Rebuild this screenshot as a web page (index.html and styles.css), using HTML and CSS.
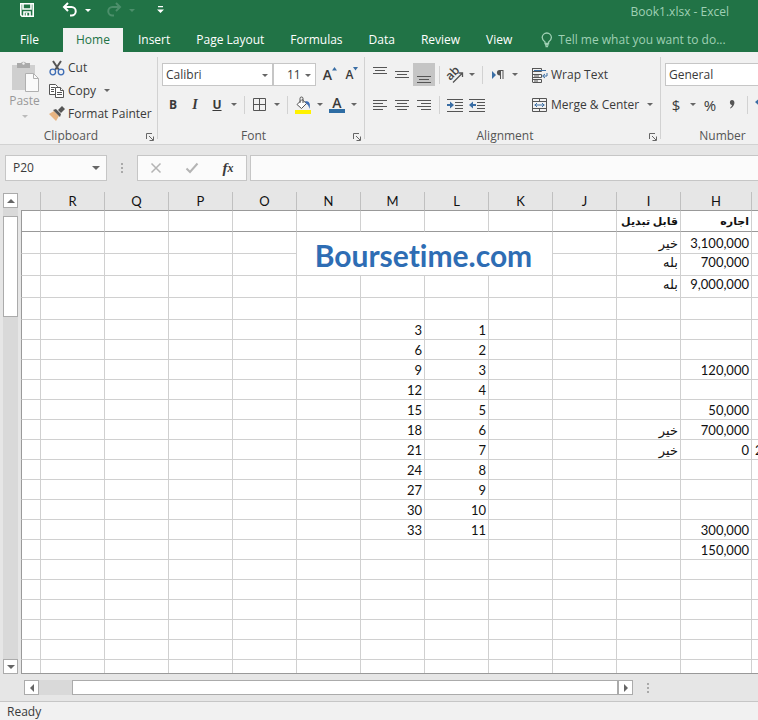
FILE: index.html
```
<!DOCTYPE html>
<html lang="en">
<head>
    <meta charset="UTF-8">
    <meta name="viewport" content="width=device-width, initial-scale=1.0">
    <title>Book1.xlsx - Excel</title>
    <link rel="stylesheet" href="styles.css">
</head>
<body>
    <header class="titlebar">
        <div class="quick-access">
            <button class="qa-button" aria-label="Save">
                <svg width="16" height="16" viewBox="0 0 16 16" fill="none" stroke="#fff" stroke-width="1.6"><path d="M1.8 1.8h12.4v12.4H3L1.8 13z"/><path d="M4 2v5h8V2M5 14v-4h6v4M7.500 11v3"/></svg>
            </button>
            <button class="qa-button undo" aria-label="Undo">
                <svg width="16" height="16" viewBox="0 0 16 16" fill="none" stroke="#fff" stroke-width="2"><path d="M6 1L2 5l4 4M2 5h7.500a4 4 0 0 1 0 8.500H8"/></svg>
            </button>
            <button class="qa-caret" aria-label="Undo list"><span class="caret light"></span></button>
            <button class="qa-button redo" aria-label="Redo" disabled>
                <svg width="16" height="16" viewBox="0 0 16 16" fill="none" stroke="#4c8f6b" stroke-width="2"><path d="M10 1l4 4-4 4M14 5H6.500a4 4 0 0 0 0 8.500H8"/></svg>
            </button>
            <button class="qa-caret" aria-label="Redo list" disabled><span class="caret faded"></span></button>
            <button class="qa-button customize" aria-label="Customize Quick Access Toolbar">
                <svg width="7" height="8" viewBox="0 0 7 8" fill="#fff"><path d="M1 0h5v1.300H1zM0 3.500h7L3.500 7z"/></svg>
            </button>
        </div>
        <div class="book-title">Book1.xlsx - Excel</div>
    </header>

    <nav class="tabs">
        <a class="tab file" href="#file">File</a>
        <a class="tab active" href="#home">Home</a>
        <a class="tab" href="#insert">Insert</a>
        <a class="tab" href="#layout">Page Layout</a>
        <a class="tab" href="#formulas">Formulas</a>
        <a class="tab" href="#data">Data</a>
        <a class="tab" href="#review">Review</a>
        <a class="tab" href="#view">View</a>
        <label class="tell-me">
            <svg width="12" height="16" viewBox="0 0 12 16" fill="none" stroke="#9fd0b4" stroke-width="1.300"><path d="M4 11.500V10C2 8.500 1.200 7.300 1.200 5.600a4.600 4.600 0 0 1 9.200 0C10.400 7.300 9.600 8.500 7.600 10v1.500zM4 13h3.600M4.500 14.700h2.600"/></svg>
            <input type="text" placeholder="Tell me what you want to do..." aria-label="Tell me what you want to do">
        </label>
    </nav>

    <section class="ribbon">
        <div class="group clipboard">
            <div class="group-body">
                <button class="paste" disabled>
                    <svg width="30" height="32" viewBox="0 0 30 32"><path fill="#cfcfcf" d="M2 5h23v25H2z"/><path fill="#aaa" d="M7 3h4a3 3 0 0 1 5 0h4v5H7z"/><circle cx="13.500" cy="3.500" r="1.200" fill="#f1f1f1"/><path fill="#fafafa" stroke="#b0b0b0" d="M15.500 13.500h8l5 5v13h-13z"/><path fill="none" stroke="#b0b0b0" d="M23.500 13.500v5h5"/></svg>
                    <span>Paste</span>
                    <span class="caret faint"></span>
                </button>
                <div class="clip-list">
                    <button class="text-button">
                        <svg width="16" height="16" viewBox="0 0 16 16" fill="none"><path stroke="#555" stroke-width="2" d="M4 1l6 9M12 1L6 10"/><circle cx="3.800" cy="12" r="2.800" stroke="#3e6db5" stroke-width="1.300"/><circle cx="12" cy="12" r="2.800" stroke="#3e6db5" stroke-width="1.300"/></svg>
                        Cut
                    </button>
                    <button class="text-button">
                        <svg width="16" height="16" viewBox="0 0 16 16" fill="#fff" stroke="#555"><path d="M.5 1.500h6l2 2v8h-8z"/><path d="M2 4.500h4M2 6.500h3M2 8.500h3"/><path d="M6.500 4.500h5l3 3v7h-8z"/><path d="M11.500 4.500v3h3M8 9.500h5M8 11.500h5"/></svg>
                        Copy <span class="caret spaced"></span>
                    </button>
                    <button class="text-button">
                        <svg width="16" height="16" viewBox="0 0 16 16"><path fill="#e8b583" d="M0 8l5-3 5 5-3 5z"/><path fill="#555" d="M4 4l3-1 5 5-1 3zM9 4l4-4 3 3-4 4z"/></svg>
                        Format Painter
                    </button>
                </div>
            </div>
            <div class="group-footer"><span>Clipboard</span>
                <button class="launcher" aria-label="Clipboard settings"><svg width="8" height="8" viewBox="0 0 8 8" fill="none" stroke="#666"><path d="M.5 6V.5H6M3 3l4 4M7.500 3.500v4h-4"/></svg></button>
            </div>
        </div>

        <div class="group font">
            <div class="group-rows">
                <div class="tool-row">
                    <span class="select-box family"><select aria-label="Font"><option>Calibri</option></select></span>
                    <span class="select-box size"><select aria-label="Font size"><option>11</option></select></span>
                    <button class="tool grow" aria-label="Increase font size"><span class="big-a">A</span><svg width="5" height="4" viewBox="0 0 5 4" fill="#3a6ea5"><path d="M0 3.500L2.500 0 5 3.500z"/></svg></button>
                    <button class="tool shrink" aria-label="Decrease font size"><span class="small-a">A</span><svg width="5" height="4" viewBox="0 0 5 4" fill="#3a6ea5"><path d="M0 0h5L2.500 3.500z"/></svg></button>
                </div>
                <div class="tool-row">
                    <button class="tool bold">B</button>
                    <button class="tool italic">I</button>
                    <button class="tool underline">U</button>
                    <button class="drop" aria-label="Underline style"><span class="caret"></span></button>
                    <span class="sep"></span>
                    <button class="tool" aria-label="Borders"><svg width="14" height="14" viewBox="0 0 14 14" fill="none" stroke="#555"><path d="M.5 .5h12v12H.5zM6.500 .5v12M.5 6.500h12"/></svg></button>
                    <button class="drop" aria-label="Border style"><span class="caret"></span></button>
                    <span class="sep"></span>
                    <button class="tool" aria-label="Fill color"><svg width="18" height="18" viewBox="0 0 18 18"><path fill="#fff" stroke="#555" d="M8 3.500L3 8.500l4.500 4 5-5z"/><path fill="none" stroke="#555" d="M6 7V2.500a1.500 1.500 0 0 1 3 0V7"/><path fill="#3e6db5" d="M11 5c5 0 5.500 3 4.500 8-1-3-1-4-3-5z"/><path fill="#fff200" d="M1 14h16v4H1z"/></svg></button>
                    <button class="drop" aria-label="Fill colors"><span class="caret"></span></button>
                    <button class="tool font-color" aria-label="Font color"><span>A</span></button>
                    <button class="drop" aria-label="Font colors"><span class="caret"></span></button>
                </div>
            </div>
            <div class="group-footer"><span>Font</span>
                <button class="launcher" aria-label="Font settings"><svg width="8" height="8" viewBox="0 0 8 8" fill="none" stroke="#666"><path d="M.5 6V.5H6M3 3l4 4M7.500 3.500v4h-4"/></svg></button>
            </div>
        </div>

        <div class="group alignment">
            <div class="align-body">
                <div class="group-rows">
                    <div class="tool-row">
                        <button class="tool" aria-label="Top align"><svg width="14" height="18" viewBox="0 0 14 18" stroke="#555"><path d="M0 1.500h14M2 4.500h10M0 7.500h14"/></svg></button>
                        <button class="tool" aria-label="Middle align"><svg width="14" height="18" viewBox="0 0 14 18" stroke="#555"><path d="M0 5.500h14M2 8.500h10M0 11.500h14"/></svg></button>
                        <button class="tool pressed" aria-label="Bottom align"><svg width="14" height="18" viewBox="0 0 14 18" stroke="#555"><path d="M0 10.500h14M2 13.500h10M0 16.500h14"/></svg></button>
                        <span class="sep"></span>
                        <button class="tool" aria-label="Orientation"><svg width="18" height="18" viewBox="0 0 18 18"><text class="ab" x="0" y="11" transform="rotate(-45 7 8)">ab</text><path fill="none" stroke="#555" stroke-width="1.300" d="M7 16.500l9-9M12.500 7H16.500v4"/></svg></button>
                        <button class="drop" aria-label="Orientation options"><span class="caret"></span></button>
                        <span class="sep"></span>
                        <button class="tool" aria-label="Text direction"><svg width="14" height="12" viewBox="0 0 14 12"><path fill="#3a6ea5" d="M1 2l4 4-4 4z"/><path fill="#555" d="M12.500 1v9h-1V2h-1.500v8H9V6.500C5 6.500 5 1 8.500 1z"/></svg></button>
                        <button class="drop" aria-label="Direction options"><span class="caret"></span></button>
                    </div>
                    <div class="tool-row">
                        <button class="tool" aria-label="Align left"><svg width="14" height="12" viewBox="0 0 14 12" stroke="#555"><path d="M0 1.500h14M0 4.500h10M0 7.500h14M0 10.500h10"/></svg></button>
                        <button class="tool" aria-label="Center"><svg width="14" height="12" viewBox="0 0 14 12" stroke="#555"><path d="M0 1.500h14M2 4.500h10M0 7.500h14M2 10.500h10"/></svg></button>
                        <button class="tool" aria-label="Align right"><svg width="14" height="12" viewBox="0 0 14 12" stroke="#555"><path d="M0 1.500h14M4 4.500h10M0 7.500h14M4 10.500h10"/></svg></button>
                        <span class="sep"></span>
                        <button class="tool" aria-label="Decrease indent"><svg width="16" height="14" viewBox="0 0 16 14"><path stroke="#555" d="M0 1.500h16M8 4.500h8M8 7.500h8M8 10.500h8M0 13.500h16"/><path fill="#3a6ea5" d="M0 6h3V3.500L7 7l-4 3.500V8H0z"/></svg></button>
                        <button class="tool" aria-label="Increase indent"><svg width="16" height="14" viewBox="0 0 16 14"><path stroke="#555" d="M0 1.500h16M8 4.500h8M8 7.500h8M8 10.500h8M0 13.500h16"/><path fill="#3a6ea5" d="M7 6H4V3.500L0 7l4 3.500V8h3z"/></svg></button>
                    </div>
                </div>
                <div class="group-rows wide-tools">
                    <button class="text-button">
                        <svg width="16" height="16" viewBox="0 0 16 16" fill="none"><path stroke="#555" d="M.5 1v14M.5 1.500h9v3h-9M.5 7.500h9v3h-9M.5 12.500h9v3h-9M2 9h5M2 14h4"/><path stroke="#3a6ea5" d="M2 3.500h12M15 6v3h-4M13 7l-2.500 2 2.500 2"/></svg>
                        Wrap Text
                    </button>
                    <button class="text-button">
                        <svg width="16" height="16" viewBox="0 0 16 16" fill="none"><path stroke="#555" d="M.5 1.500h14v13H.5zM.5 4.500h14M.5 11.500h14M7.500 1.500v3M7.500 11.500v3"/><path stroke="#3a6ea5" d="M2.500 8h10M5 6L3 8l2 2M10 6l2 2-2 2"/></svg>
                        Merge &amp; Center <span class="caret spaced"></span>
                    </button>
                </div>
            </div>
            <div class="group-footer"><span>Alignment</span>
                <button class="launcher" aria-label="Alignment settings"><svg width="8" height="8" viewBox="0 0 8 8" fill="none" stroke="#666"><path d="M.5 6V.5H6M3 3l4 4M7.500 3.500v4h-4"/></svg></button>
            </div>
        </div>

        <div class="group number">
            <div class="group-rows">
                <div class="tool-row">
                    <span class="select-box format"><select aria-label="Number format"><option>General</option></select></span>
                </div>
                <div class="tool-row">
                    <button class="tool symbol">$</button>
                    <button class="drop" aria-label="Currency list"><span class="caret"></span></button>
                    <button class="tool symbol">%</button>
                    <button class="tool symbol" aria-label="Comma style"><svg width="6" height="9" viewBox="0 0 6 9" fill="#555"><path d="M3 0c3 0 4 5-1.500 8.500L1 8c1.500-1.200 2-2.500 2-3C.5 5 0 0 3 0z"/></svg></button>
                    <span class="sep"></span>
                    <button class="tool" aria-label="Increase decimal"><svg width="16" height="14" viewBox="0 0 16 14"><path fill="#3a6ea5" d="M0 4l4-3.500V3h4v2H4v2.500z"/></svg></button>
                </div>
            </div>
            <div class="group-footer"><span>Number</span></div>
        </div>
    </section>

    <section class="formula-bar">
        <div class="name-box">
            <input type="text" value="P20" aria-label="Name box">
            <button class="drop" aria-label="Named ranges"><span class="caret large"></span></button>
        </div>
        <span class="dots"></span>
        <div class="formula-buttons">
            <button aria-label="Cancel" disabled><svg width="12" height="12" viewBox="0 0 12 12" stroke="#b4b4b4" stroke-width="1.500"><path d="M1.500 1.500l9 9M10.500 1.500l-9 9"/></svg></button>
            <button aria-label="Enter" disabled><svg width="14" height="12" viewBox="0 0 14 12" fill="none" stroke="#b4b4b4" stroke-width="2"><path d="M1.500 6.500L5 10l7.500-8.500"/></svg></button>
            <button class="fx" aria-label="Insert function">f<small>x</small></button>
        </div>
        <input class="formula-input" type="text" aria-label="Formula">
    </section>

    <main class="workspace">
        <div class="v-scroll">
            <button aria-label="Scroll up"><span class="arrow up"></span></button>
            <div class="v-track"><div class="v-thumb"></div></div>
            <button aria-label="Scroll down"><span class="arrow down"></span></button>
        </div>
        <div class="sheet">
            <table>
                <colgroup>
                    <col class="col-edge"><col span="10" class="col"><col class="col-h"><col class="col">
                </colgroup>
                <thead>
                    <tr><th></th><th>R</th><th>Q</th><th>P</th><th>O</th><th>N</th><th>M</th><th>L</th><th>K</th><th>J</th><th>I</th><th>H</th><th></th></tr>
                </thead>
                <tbody id="cells"></tbody>
            </table>
        </div>
    </main>

    <div class="h-scroll">
        <button aria-label="Scroll left"><span class="arrow left"></span></button>
        <div class="h-track"><div class="h-thumb"></div></div>
        <button aria-label="Scroll right"><span class="arrow right"></span></button>
        <span class="dots"></span>
    </div>

    <footer class="status">Ready</footer>

    <script>
        const columns = ["", "R", "Q", "P", "O", "N", "M", "L", "K", "J", "I", "H", "G"];

        const values = {
            I1: "قابل تبدیل", H1: "اجاره",
            N2: "Boursetime.com",
            I2: "خیر", H2: "3,100,000",
            I3: "بله", H3: "700,000",
            I4: "بله", H4: "9,000,000",
            H8: "120,000", H10: "50,000",
            I11: "خیر", H11: "700,000",
            I12: "خیر", H12: "0", G12: "2",
            H16: "300,000", H17: "150,000"
        };

        // L counts up from 1, M holds its multiples of three
        for (let i = 1; i <= 11; i++) {
            values["L" + (i + 5)] = i;
            values["M" + (i + 5)] = i * 3;
        }

        const body = document.getElementById("cells");
        for (let r = 1; r <= 40; r++) {
            const row = body.insertRow();
            if (r === 1) row.className = "heading-row";
            else if (r <= 5) row.className = "tall-row";
            if (r === 3 || r === 4) row.className += " top-row";

            columns.forEach(function(name) {
                // N2:K3 is one merged cell
                if ((r === 2 && "MLK".includes(name) && name) || (r === 3 && "NMLK".includes(name) && name)) return;
                const cell = row.insertCell();
                cell.textContent = values[name + r] ?? "";
                if (name === "G") cell.className = "cut-off";
                if (name === "N" && r === 2) {
                    cell.colSpan = 4;
                    cell.rowSpan = 2;
                    cell.className = "merged";
                }
            });
        }
    </script>
</body>
</html>
```
FILE: styles.css
```
* {
    box-sizing: border-box;
}

body {
    display: flex;
    flex-direction: column;
    height: 100vh;
    margin: 0;
    overflow: hidden;
    background-color: #e6e6e6;
    color: #3a3a3a;
    font-family: "Open Sans", "Noto Sans", sans-serif;
    font-size: 12px;
    line-height: 16px;
}

button, input, select {
    margin: 0;
    padding: 0;
    border: none;
    border-radius: 0;
    background: none;
    color: inherit;
    font: inherit;
}

button {
    display: flex;
    align-items: center;
    justify-content: center;
    flex: none;
    white-space: nowrap;
}

svg {
    display: block;
    flex: none;
    overflow: visible;
}

/* Small drop-down triangle */
.caret {
    flex: none;
    border: 3px solid transparent;
    border-top-color: #666;
    border-bottom: none;
}

.caret.light {
    border-top-color: #fff;
}

.caret.faded {
    border-top-color: #4c8f6b;
}

.caret.faint {
    border-top-color: #bbb;
}

.caret.large {
    border-width: 4px;
    border-bottom: none;
}

.caret.spaced {
    margin-left: 5px;
}

/* Title bar */
.titlebar {
    display: flex;
    flex: none;
    justify-content: space-between;
    height: 28px;
    padding: 2px 29px 0 19px;
    background-color: #217346;
}

.quick-access {
    display: flex;
    align-items: center;
    height: 16px;
}

.undo {
    margin-left: 27px;
}

.redo {
    margin-left: 8px;
}

.qa-caret {
    width: 20px;
}

.customize {
    margin-left: 15px;
}

.book-title {
    padding-top: 2px;
    color: #9fd0b4;
}

/* Ribbon tabs */
.tabs {
    display: flex;
    flex: none;
    height: 24px;
    padding-left: 7px;
    background-color: #217346;
}

.tab {
    padding: 4px 13px;
    color: #fff;
    text-decoration: none;
    white-space: nowrap;
}

.tab.file {
    margin-right: 11px;
}

.tab.active {
    margin-right: 2px;
    background-color: #f1f1f1;
    color: #217346;
}

.tell-me {
    display: flex;
    flex: 1;
    align-items: center;
    gap: 5px;
    padding-left: 16px;
}

.tell-me input {
    flex: 1;
    min-width: 0;
}

.tell-me input::placeholder {
    color: #9fd0b4;
}

/* Ribbon */
.ribbon {
    display: flex;
    flex: none;
    height: 93px;
    overflow: hidden;
    border-bottom: 1px solid #d2d2d2;
    background-color: #f1f1f1;
}

.group {
    display: flex;
    flex: none;
    flex-direction: column;
    justify-content: space-between;
    position: relative;
    padding: 4px 4px 0;
}

.group::after {
    content: "";
    position: absolute;
    top: 5px;
    right: 0;
    bottom: 5px;
    border-right: 1px solid #d2d2d2;
}

.clipboard {
    width: 158px;
}

.font {
    width: 207px;
}

.alignment {
    width: 296px;
}

.number {
    width: 123px;
}

.group-body {
    display: flex;
    gap: 4px;
}

.paste {
    flex-direction: column;
    justify-content: flex-start;
    width: 41px;
    padding-top: 4px;
    color: #999;
}

.paste .caret {
    margin-top: 6px;
}

.paste span {
    margin-top: 1px;
}

.clip-list {
    display: flex;
    flex-direction: column;
}

.text-button {
    justify-content: flex-start;
    gap: 3px;
    height: 23px;
}

.group-footer {
    display: flex;
    align-items: center;
    justify-content: center;
    position: relative;
    height: 16px;
    padding-right: 16px;
    color: #555;
}

.number .group-footer {
    padding-right: 0;
}

.launcher {
    position: absolute;
    top: 5px;
    right: 0;
}

.group-rows {
    display: flex;
    flex-direction: column;
    gap: 7px;
    padding-top: 7px;
}

.tool-row {
    display: flex;
    align-items: center;
    height: 23px;
}

.tool {
    width: 22px;
    height: 23px;
}

.pressed {
    background-color: #c5c5c5;
}

.drop {
    width: 12px;
    height: 23px;
}

.sep {
    flex: none;
    width: 1px;
    height: 18px;
    margin: 0 4px;
    background-color: #d2d2d2;
}

.select-box {
    position: relative;
    flex: none;
    height: 23px;
    border: 1px solid #c6c6c6;
    background-color: #fff;
}

.select-box select {
    width: 100%;
    height: 100%;
    padding-left: 3px;
    appearance: none;
}

.select-box::after {
    content: "";
    position: absolute;
    top: 10px;
    right: 4px;
    border: 3px solid transparent;
    border-top-color: #666;
    border-bottom: none;
}

.family {
    width: 111px;
}

.size {
    width: 43px;
    margin-right: 3px;
}

.size select {
    padding-left: 13px;
}

.format {
    width: 114px;
}

.grow, .shrink {
    align-items: flex-start;
}

.grow svg, .shrink svg {
    margin-top: 4px;
}

.big-a {
    padding-top: 4px;
    font-size: 14px;
    font-weight: 600;
}

.small-a {
    padding-top: 4px;
    font-weight: 600;
}

.bold {
    font-weight: bold;
}

.italic {
    font-family: "Liberation Serif", serif;
    font-size: 14px;
    font-style: italic;
    font-weight: bold;
}

.underline {
    font-weight: bold;
    text-decoration: underline;
}

.font-color span {
    width: 16px;
    border-bottom: 4px solid #2e6da4;
    font-size: 14px;
    font-weight: 600;
    line-height: 13px;
}

.ab {
    fill: #444;
    font-size: 12px;
    font-weight: 600;
}

.align-body {
    display: flex;
}

.wide-tools {
    position: absolute;
    left: 167px;
}

.symbol {
    font-size: 15px;
}

/* Formula bar */
.formula-bar {
    display: flex;
    flex: none;
    height: 47px;
    padding: 10px 0 11px 5px;
}

.name-box, .formula-buttons, .formula-input {
    border: 1px solid #c6c6c6;
    background-color: #fbfbfb;
}

.name-box {
    display: flex;
    width: 102px;
    padding-right: 4px;
}

.name-box input {
    flex: 1;
    min-width: 0;
    padding-left: 7px;
}

.dots {
    flex: none;
    align-self: center;
    width: 2px;
    height: 10px;
    margin: 0 14px;
    background: repeating-linear-gradient(#aaa 0 2px, transparent 2px 4px);
}

.formula-buttons {
    display: flex;
    width: 110px;
    margin-right: 3px;
}

.formula-buttons button {
    flex: 1;
}

.fx {
    font-family: "Liberation Serif", serif;
    font-size: 15px;
    font-style: italic;
    font-weight: bold;
}

.fx small {
    font-size: 12px;
}

.formula-input {
    flex: 1;
    min-width: 0;
    border-right: none;
}

/* Worksheet */
.workspace {
    display: flex;
    flex: 1;
    min-height: 0;
}

.v-scroll {
    display: flex;
    flex: none;
    flex-direction: column;
    width: 21px;
    padding: 1px 3px 0;
}

.v-scroll button, .h-scroll button {
    width: 15px;
    height: 15px;
    border: 1px solid #ababab;
    background-color: #fff;
}

.v-track {
    flex: 1;
    width: 15px;
    padding-top: 8px;
    background-color: #d9d9d9;
}

.v-thumb {
    height: 101px;
    border: 1px solid #ababab;
    background-color: #fff;
}

.arrow {
    border: 4px solid transparent;
}

.arrow.up {
    border-top: none;
    border-bottom-color: #666;
}

.arrow.down {
    border-bottom: none;
    border-top-color: #666;
}

.arrow.left {
    border-left: none;
    border-right-color: #666;
}

.arrow.right {
    border-right: none;
    border-left-color: #666;
}

.sheet {
    flex: 1;
    min-width: 0;
    overflow: hidden;
    border-bottom: 1px solid #999;
}

table {
    width: 795px;
    border-spacing: 0;
    table-layout: fixed;
    color: #111;
    font-family: Lato, "DejaVu Sans", sans-serif;
    font-size: 13px;
    font-variant-ligatures: no-common-ligatures;
    line-height: 16px;
}

.col-edge {
    width: 20px;
}

.col {
    width: 64px;
}

.col-h {
    width: 71px;
}

th {
    height: 19px;
    padding: 0;
    border-right: 1px solid #c0c0c0;
    border-bottom: 1px solid #999;
    font-weight: normal;
}

td {
    height: 20px;
    padding: 0 2px 0 0;
    overflow: hidden;
    border-right: 1px solid #d0d0d0;
    border-bottom: 1px solid #d0d0d0;
    background-color: #fff;
    text-align: right;
    white-space: nowrap;
}

td:first-child {
    border-left: 1px solid #999;
}

.heading-row td {
    height: 21px;
    border-bottom-color: #999;
    font-size: 11px;
    font-weight: bold;
}

.tall-row td {
    height: 22px;
}

.top-row td {
    vertical-align: top;
}

td.merged {
    padding-top: 3px;
    color: #2e6db4;
    font-size: 30px;
    font-weight: bold;
    line-height: 32px;
    text-align: center;
}

td.cut-off {
    padding-left: 3px;
    text-align: left;
}

/* Bottom scroll bar and status */
.h-scroll {
    display: flex;
    flex: none;
    align-items: center;
    height: 27px;
    padding: 0 95px 0 24px;
}

.h-track {
    flex: 1;
    height: 15px;
    padding-left: 33px;
    background-color: #d9d9d9;
}

.h-thumb {
    height: 15px;
    border: 1px solid #ababab;
    background-color: #fff;
}

.status {
    flex: none;
    height: 19px;
    padding: 2px 7px 0;
    border-top: 1px solid #c6c6c6;
    background-color: #f1f1f1;
}
```
